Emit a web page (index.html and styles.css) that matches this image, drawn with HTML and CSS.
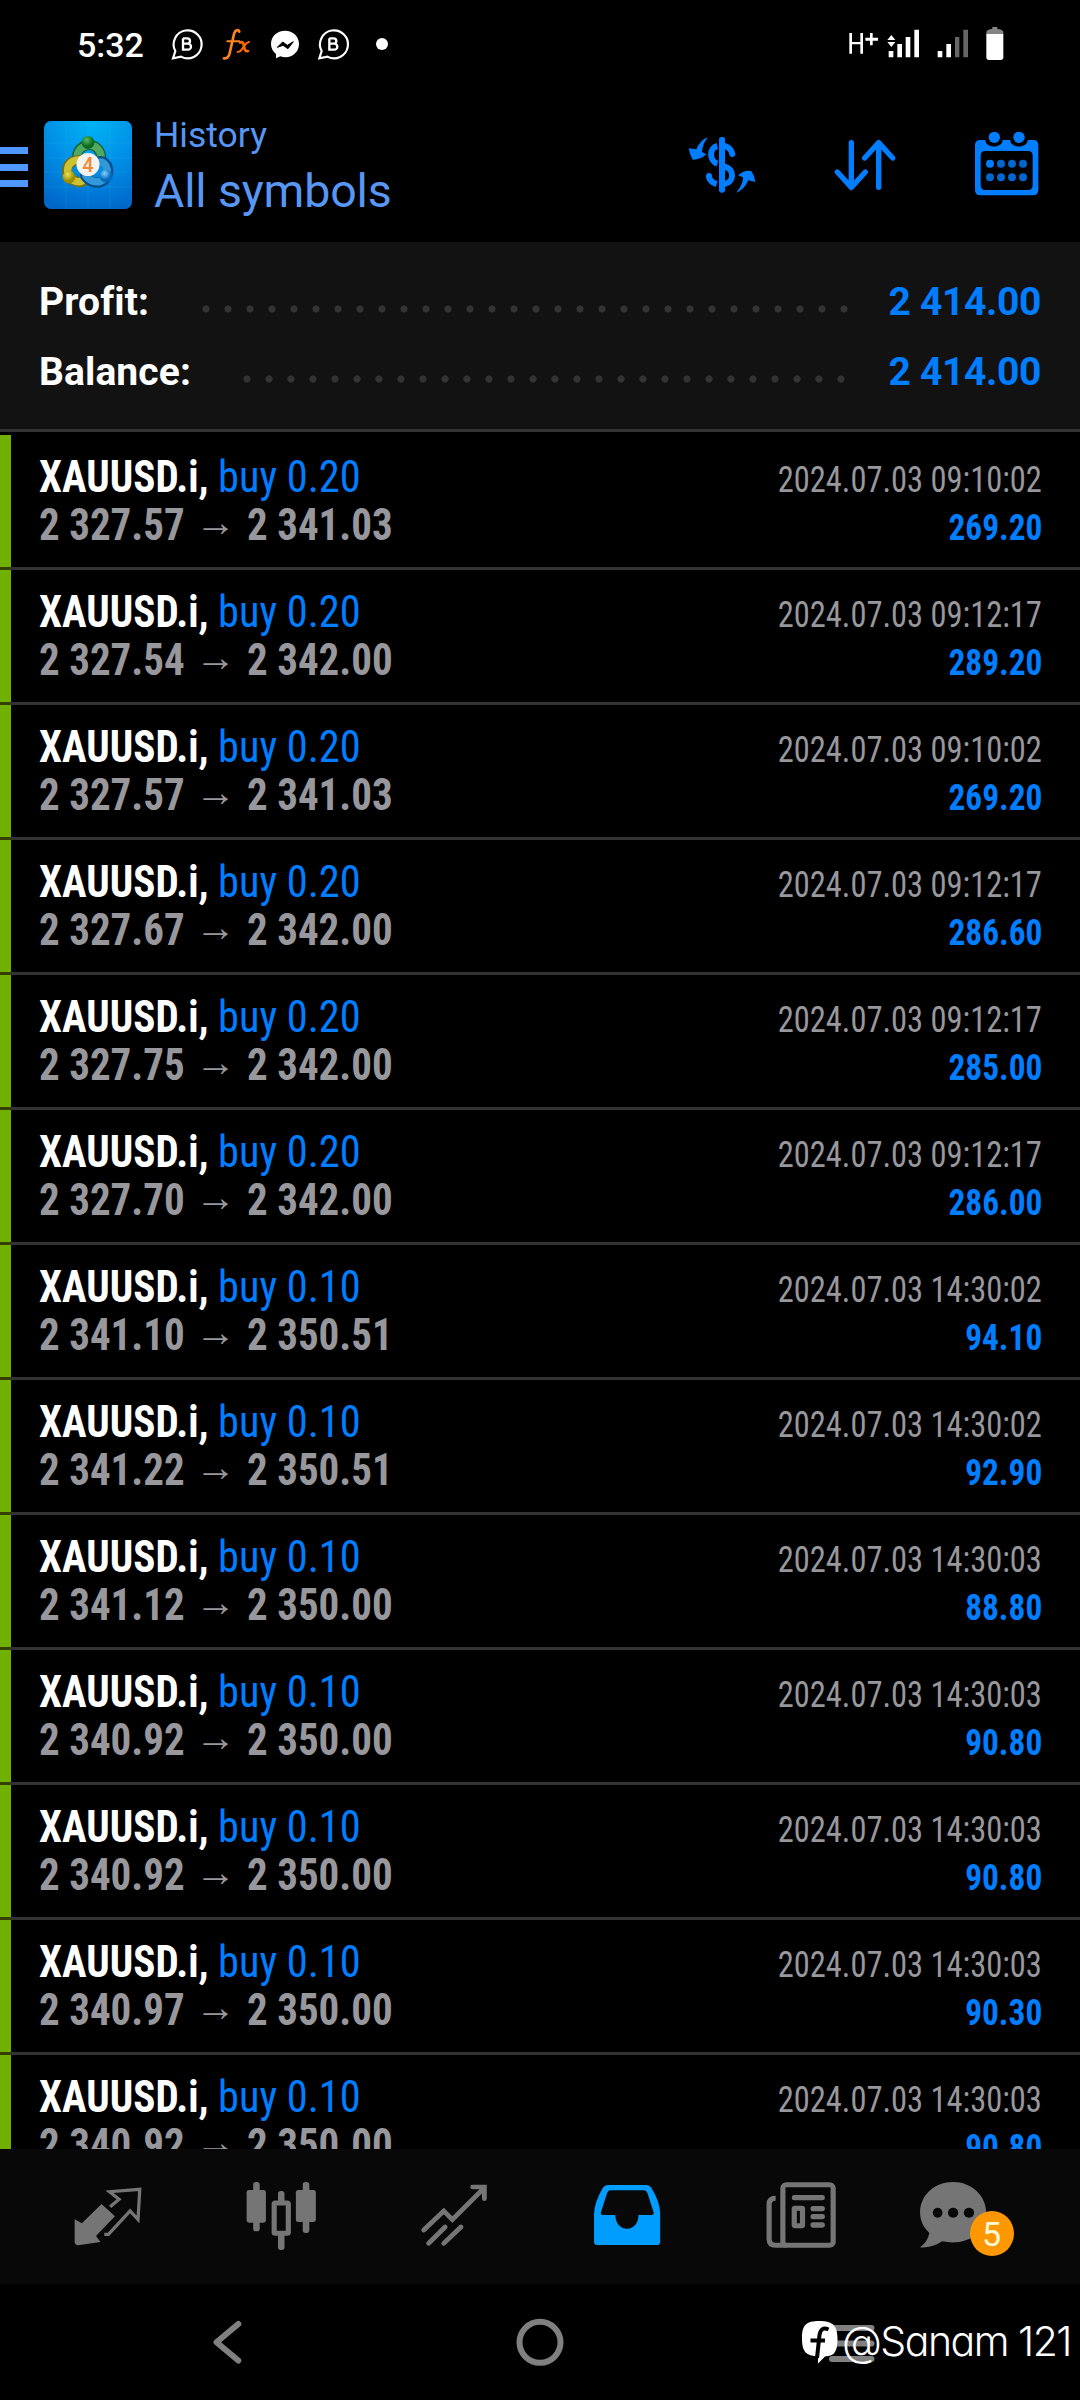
FILE: index.html
```html
<!DOCTYPE html>
<html lang="en">
<head>
<meta charset="utf-8">
<title>History</title>
<link rel="stylesheet" href="styles.css">
</head>
<body>
<div class="screen">
  <header class="status">
    <span class="clock">5:32</span>
    <svg class="notices" width="220" height="40" viewBox="510 72 660 120">
      <g id="biz" fill="none" stroke="#fff" stroke-width="6.5"><path d="M519 175L526 153A42 42 0 1 1 543 170Z" stroke-linejoin="miter"/><path d="M549 115V149H564A9 9 0 0 0 564 131H549M549 115H562A8 8 0 0 1 562 131" stroke-width="7"/></g>
      <g stroke="#ff8420" fill="none" stroke-linecap="round"><path d="M718 95C716 88 706 88 702 102L689 160Q685 177 672 175" stroke-width="8"/><path d="M682 124H718" stroke-width="6"/><path d="M720 128Q730 122 732 139T744 153" stroke-width="8" stroke="#ff6a00"/><path d="M747 126Q738 128 730 142T713 156" stroke-width="6" stroke="#ff6a00"/></g>
      <path d="M855 92C831 92 813 109 813 132C813 145 819 155 828 162V175L841 169C871 179 897 159 897 132C897 109 879 92 855 92Z" fill="#fff"/>
      <path d="M832 142L848 126L862 136L880 125L864 146L849 136Z" fill="#000" stroke="#000" stroke-width="3"/>
      <use href="#biz" x="439"/>
      <circle cx="1146" cy="132" r="18" fill="#fff"/>
    </svg>
    <svg class="signals" width="160" height="40" viewBox="560 72 480 120" fill="#fff">
      <path d="M567 99h8v27h25V99h8v62h-8v-28h-25v28h-8zM629 99h8v14h16v9h-16v14h-8v-14h-14v-9h14z"/>
      <path d="M681 120L693 105L705 120ZM681 126L693 141L705 126ZM685 153h14v19h-14zM711 132h14v40h-14zM736 111h14v61h-14zM762 89h14v83h-14zM832 153h14v19h-14zM858 132h14v40h-14z"/>
      <path d="M884 111h13v61h-13zM909 89h14v83h-14z" fill="#666"/>
      <path d="M978 102V96Q980 88 996 87V81H1011V87Q1027 88 1029 96V102Z" fill="#858585"/><path d="M978 102H1029V172Q1029 180 1021 180H986Q978 180 978 172Z"/>
    </svg>
  </header>

  <div class="appbar">
    <div class="menu"><i></i><i></i><i></i></div>
    <svg class="logo" width="90" height="90" viewBox="0 0 90 90">
      <defs>
        <radialGradient id="sky" cx=".55" cy="0" r="1.05"><stop offset="0" stop-color="#00b4f6"/><stop offset=".5" stop-color="#0090e6"/><stop offset="1" stop-color="#0067c9"/></radialGradient>
        <radialGradient id="green" cx=".4" cy=".3"><stop offset="0" stop-color="#5cb95c"/><stop offset="1" stop-color="#0b6b20"/></radialGradient>
        <radialGradient id="gold" cx=".4" cy=".3"><stop offset="0" stop-color="#eee35c"/><stop offset="1" stop-color="#9b8d00"/></radialGradient>
        <radialGradient id="blue" cx=".4" cy=".3"><stop offset="0" stop-color="#82d2ff"/><stop offset="1" stop-color="#0068bb"/></radialGradient>
      </defs>
      <rect x="1" y="1" width="88" height="88" rx="7" fill="url(#sky)"/>
      <path d="M23 1V89M45 1V89M67 1V89M1 23H89M1 38H89M1 52H89M1 67H89" stroke="#3bb8f5" stroke-opacity=".25" stroke-width=".7"/>
      <g fill="none" stroke-linecap="round">
        <path d="M34 40C32 20 60 20 58 40" stroke="#125f2e" stroke-width="10"/><path d="M34 39C33 21 59 21 58 38" stroke="#4fa960" stroke-width="7.5"/>
        <path d="M37 40C21 40 20 57 32 61C38 64 43 61 45 57" stroke="#756f13" stroke-width="10"/><path d="M36 40C22 40 21 57 32 61C37 63 41 61 43 57" stroke="#cdc234" stroke-width="7.5"/>
        <path d="M42 56C50 68 68 63 65 48C64 44 61 41 57 41" stroke="#064e8c" stroke-width="10"/><path d="M43 56C51 67 67 61 64 49C63 45 61 42 57 42" stroke="#3199da" stroke-width="7.5"/>
      </g>
      <circle cx="45" cy="22.500" r="6.5" fill="url(#green)"/><circle cx="26" cy="57" r="6.5" fill="url(#gold)"/><circle cx="63" cy="56" r="6.5" fill="url(#blue)"/>
      <circle cx="45" cy="44.500" r="11.500" fill="#f5f3f0"/>
      <text class="logo-number" x="45" y="51.500" text-anchor="middle">4</text>
    </svg>
    <div class="titles"><span class="section">History</span><span class="filter">All symbols</span></div>
    <div class="actions">
      <svg width="72" height="80" viewBox="78 378 216 240">
        <rect x="177" y="411" width="18" height="167" rx="7" fill="#007eff"/>
        <g fill="none" stroke="#007eff" stroke-width="18"><path d="M172 438C147 443 147 483 172 491"/><path d="M195 438Q213 444 217 462" stroke-linecap="round"/><path d="M193 499C224 507 224 546 193 552"/><path d="M146 527Q149 546 170 552"/></g><circle cx="147" cy="528" r="9" fill="#007eff"/>
        <path d="M144 412Q122 418 109 448L86 445Q89 463 98 479Q120 480 139 463L126 456Q128 430 144 412ZM229 578Q251 550 249 532L234 526Q253 508 274 513Q284 527 286 546L265 541Q252 570 229 578Z" fill="#007eff"/>
      </svg>
      <svg width="72" height="80" viewBox="507 378 216 240"><path d="M574 428V562M532 516L574 562L616 516M656 562V428M614 474L656 428L698 474" fill="none" stroke="#007eff" stroke-width="16" stroke-linecap="round" stroke-linejoin="round"/></svg>
      <svg width="72" height="80" viewBox="933 378 216 240" fill="#007eff">
        <path fill-rule="evenodd" d="M961 420H976C976 446 1028 446 1028 420H1051C1051 446 1103 446 1103 420H1119Q1135 420 1135 436V570Q1135 586 1119 586H961Q945 586 945 570V436Q945 420 961 420ZM976 453Q962 453 962 467V556Q962 570 976 570H1104Q1118 570 1118 556V467Q1118 453 1104 453Z"/>
        <circle cx="1003" cy="412" r="17"/><circle cx="1077" cy="412" r="17"/>
        <circle cx="990" cy="491" r="12"/><g fill="#0067cf"><circle cx="1023" cy="491" r="12"/><circle cx="1056" cy="491" r="12"/><circle cx="1089" cy="491" r="12"/><circle cx="990" cy="532" r="12"/><circle cx="1023" cy="532" r="12"/><circle cx="1056" cy="532" r="12"/><circle cx="1089" cy="532" r="12"/></g>
      </svg>
    </div>
  </div>

  <section class="summary">
    <div class="total"><b>Profit:</b><span class="leader leader-profit"></span><strong>2 414.00</strong></div>
    <div class="total"><b>Balance:</b><span class="leader leader-balance"></span><strong>2 414.00</strong></div>
  </section>

  <main class="deals" id="deals"></main>

  <nav class="tabs">
    <svg width="108" height="90" viewBox="158 393 313.600 270" preserveAspectRatio="none"><path d="M218 538L239 550L296 492L335 529L280 588L293 606L228 616Q219 616 218 607Z" fill="#757575"/><path d="M321 500L347 478L319 455L407 448L402 539L379 513L316 583H304" fill="none" stroke="#757575" stroke-width="9.500"/></svg>
    <svg width="108" height="90" viewBox="659 393 313.600 270" preserveAspectRatio="none" fill="#757575"><rect x="716" y="450" width="56" height="98" rx="7"/><rect x="735" y="426" width="19" height="148" rx="8"/><rect x="859" y="450" width="58" height="96" rx="7"/><rect x="879" y="426" width="19" height="153" rx="8"/><rect x="807" y="453" width="19" height="35" rx="8"/><rect x="807" y="580" width="19" height="50" rx="8"/><rect x="796" y="489" width="41" height="91" rx="3" fill="none" stroke="#757575" stroke-width="15"/></svg>
    <svg width="108" height="90" viewBox="1161 393 313.600 270" preserveAspectRatio="none"><path d="M1230 570L1288 513L1313 539L1404 445M1372 441H1406V476M1244 610L1292 561M1288 610L1338 561" fill="none" stroke="#757575" stroke-width="14" stroke-linecap="round"/></svg>
    <svg width="108" height="90" viewBox="94 393 313.600 270" preserveAspectRatio="none"><path fill="#009dff" fill-rule="evenodd" d="M199 435H309Q320 435 326 446Q350 487 350 521V605Q350 615 340 615H168Q158 615 158 605V521Q159 487 182 446Q188 435 199 435ZM205 451Q199 451 196 459L178 517Q176 525 184 525H220C220 580 287 580 287 525H325Q333 525 331 517L313 459Q310 451 304 451Z"/></svg>
    <svg width="108" height="90" viewBox="595 393 313.600 270" preserveAspectRatio="none"><g fill="none" stroke="#757575" stroke-width="15"><rect x="705" y="434" width="146" height="182" rx="10"/><path d="M684 475Q665 475 665 493V597Q665 616 684 616H715"/></g><g fill="#757575"><rect x="731" y="465" width="96" height="16" rx="7"/><rect x="785" y="498" width="42" height="16" rx="7"/><rect x="785" y="522" width="42" height="16" rx="7"/><rect x="785" y="547" width="42" height="16" rx="7"/></g><rect x="738" y="505" width="24" height="52" rx="2" fill="none" stroke="#757575" stroke-width="15"/></svg>
    <div class="messages">
      <svg width="108" height="90" viewBox="1097 393 313.600 270" preserveAspectRatio="none"><path d="M1199 426C1145 426 1103 466 1103 517C1103 542 1113 563 1130 579Q1125 606 1103 622Q1140 624 1167 604C1238 619 1295 580 1295 518C1295 467 1253 426 1199 426Z" fill="#757575"/><g fill="#080808"><ellipse cx="1154" cy="518" rx="14" ry="15"/><ellipse cx="1199" cy="518" rx="15" ry="15"/><ellipse cx="1245" cy="518" rx="15" ry="15"/></g></svg>
      <span class="badge">5</span>
    </div>
  </nav>

  <footer class="system-nav">
    <svg width="48" height="56" viewBox="204 2314 48 56"><path d="M238.300 2324L216.500 2342.300L238.300 2360.500" fill="none" stroke="#808080" stroke-width="6" stroke-linecap="round" stroke-linejoin="round"/></svg>
    <svg width="56" height="56" viewBox="512 2314 56 56"><circle cx="540" cy="2342.300" r="20.500" fill="none" stroke="#808080" stroke-width="6"/></svg>
    <svg width="48" height="56" viewBox="828 2314 48 56"><path d="M832 2328H871.500M832 2343.500H871.500M832 2359H871.500" stroke="#808080" stroke-width="6" stroke-linecap="round"/></svg>
    <div class="watermark">
      <svg width="38" height="44" viewBox="0 0 38 44"><path d="M18.500 1C5 1 1 5 1 18.500S5 35.500 17 36.500V43.500L24 36.500C34 36 36.500 31 36.500 18.500S32 1 18.500 1Z" fill="#fff"/><path d="M27.500 9.500Q20 6 18.500 15L16 38M9.500 20.500H24" fill="none" stroke="#000" stroke-width="4"/></svg>
      <span>@Sanam 121</span>
    </div>
  </footer>
</div>
<script src="deals.js"></script>
</body>
</html>
```
FILE: deals.js
```js
const deals = [
  ["0.20", "2 327.57", "2 341.03", "09:10:02", "269.20"],
  ["0.20", "2 327.54", "2 342.00", "09:12:17", "289.20"],
  ["0.20", "2 327.57", "2 341.03", "09:10:02", "269.20"],
  ["0.20", "2 327.67", "2 342.00", "09:12:17", "286.60"],
  ["0.20", "2 327.75", "2 342.00", "09:12:17", "285.00"],
  ["0.20", "2 327.70", "2 342.00", "09:12:17", "286.00"],
  ["0.10", "2 341.10", "2 350.51", "14:30:02", "94.10"],
  ["0.10", "2 341.22", "2 350.51", "14:30:02", "92.90"],
  ["0.10", "2 341.12", "2 350.00", "14:30:03", "88.80"],
  ["0.10", "2 340.92", "2 350.00", "14:30:03", "90.80"],
  ["0.10", "2 340.92", "2 350.00", "14:30:03", "90.80"],
  ["0.10", "2 340.97", "2 350.00", "14:30:03", "90.30"],
  ["0.10", "2 340.92", "2 350.00", "14:30:03", "90.80"]
];

document.getElementById("deals").innerHTML = deals.map(([lots, open, close, time, profit]) => `
  <article class="deal">
    <div class="stripe"></div>
    <div class="deal-body">
      <div class="trade">
        <div class="line"><b class="symbol">XAUUSD.i,</b><span class="side">buy ${lots}</span></div>
        <div class="line prices"><b class="price">${open}</b><span class="arrow">→</span><b class="price">${close}</b></div>
      </div>
      <div class="result"><span class="time">2024.07.03 ${time}</span><b class="profit">${profit}</b></div>
    </div>
  </article>`).join("");
```
FILE: styles.css
```css
* { box-sizing: border-box; }
body { margin: 0; background: #000; font-family: Roboto, sans-serif; }
svg { display: block; flex: none; }
.screen { width: 1080px; height: 2400px; overflow: hidden; display: flex; flex-direction: column; background: #000; color: #fff; }

.status { height: 88px; flex: none; display: flex; align-items: center; padding: 0 73px 0 77px; }
.clock { width: 93px; font-size: 34px; font-weight: 460; line-height: 40px; padding-top: 2px; }
.signals { margin-left: auto; }

.appbar { height: 154px; flex: none; display: flex; align-items: flex-start; padding: 32px 37px 0 0; }
.menu { width: 28px; margin: 27px 15px 0 0; display: grid; gap: 9.500px; }
.menu i { height: 7px; background: #4f98ff; }
.logo-number { font: 500 20px Roboto, sans-serif; fill: #f18a35; }
.titles { display: flex; flex-direction: column; margin-left: 21px; color: #5896f4; white-space: nowrap; }
.section { font-size: 35.500px; line-height: 40px; margin-top: -5px; }
.filter { font-size: 46.500px; line-height: 56px; margin-top: 8px; letter-spacing: -0.15px; }
.actions { display: flex; gap: 70.500px; margin: 6px 0 0 auto; }

.summary { height: 190px; flex: none; background: #121212; border-bottom: 3px solid #333; padding: 25px 39px 0; }
.total { height: 70px; display: flex; font-size: 39px; line-height: 70px; }
.total b { font-weight: 700; letter-spacing: 0.1px; }
.total strong { width: 186px; text-align: right; color: #007eff; font-weight: 700; letter-spacing: -0.35px; white-space: nowrap; }
.leader { height: 70px; margin-left: auto; background: radial-gradient(circle at 11px 42px, #333 3.200px, transparent 3.900px) 0 0 / 22px 70px repeat-x; }
.leader-profit { width: 660px; }
.leader-balance { width: 616px; margin-right: 3px; }

.deals { flex: 1; min-height: 0; overflow: hidden; padding-top: 3px; font-stretch: 75%; font-family: "Roboto Condensed", Roboto, sans-serif; }
.deal { height: 135px; display: flex; }
.stripe { width: 11px; background: #70b000; border-bottom: 3px solid #343f00; }
.deal-body { flex: 1; display: flex; justify-content: space-between; padding: 18px 38px 0 28px; border-bottom: 3px solid #333; white-space: nowrap; }
.trade { font-size: 44px; }
.line { display: flex; height: 48px; line-height: 48px; }
.symbol { transform: scaleX(.935); transform-origin: left; }
.side { color: #007eff; margin-left: -2px; transform: scaleX(.963); transform-origin: left; }
.prices { color: #97979c; }
.price { transform: scaleX(.932); transform-origin: left; }
.arrow { font-family: "Liberation Sans", sans-serif; font-size: 41px; line-height: 43px; width: 62px; margin-left: -10.500px; text-align: center; }
.result { display: flex; flex-direction: column; align-items: flex-end; padding-top: 3px; font-size: 36px; line-height: 48px; }
.time { color: #97979c; transform: scaleX(.902); transform-origin: right; }
.profit { color: #007eff; transform: scaleX(.926); transform-origin: right; }

.tabs { height: 135px; flex: none; display: grid; grid-template-columns: repeat(6, 1fr); justify-items: center; padding: 22px 22px 0; background: #080808; }
.messages { position: relative; width: 108px; height: 90px; }
.badge { position: absolute; left: 52px; top: 40px; width: 44px; height: 45px; border-radius: 50%; background: #ff9800; color: #fff8d8; font-size: 34px; line-height: 46px; text-align: center; }

.system-nav { position: relative; height: 116px; flex: none; display: grid; grid-template-columns: repeat(3, 312px); justify-content: center; justify-items: center; padding-top: 30px; }
.watermark { position: absolute; left: 801px; top: 36px; display: flex; font: 300 41px/44px Inter, sans-serif; font-feature-settings: "cv11"; letter-spacing: -1.500px; white-space: nowrap; }
.watermark span { margin: -1px 0 0 3px; }
```
